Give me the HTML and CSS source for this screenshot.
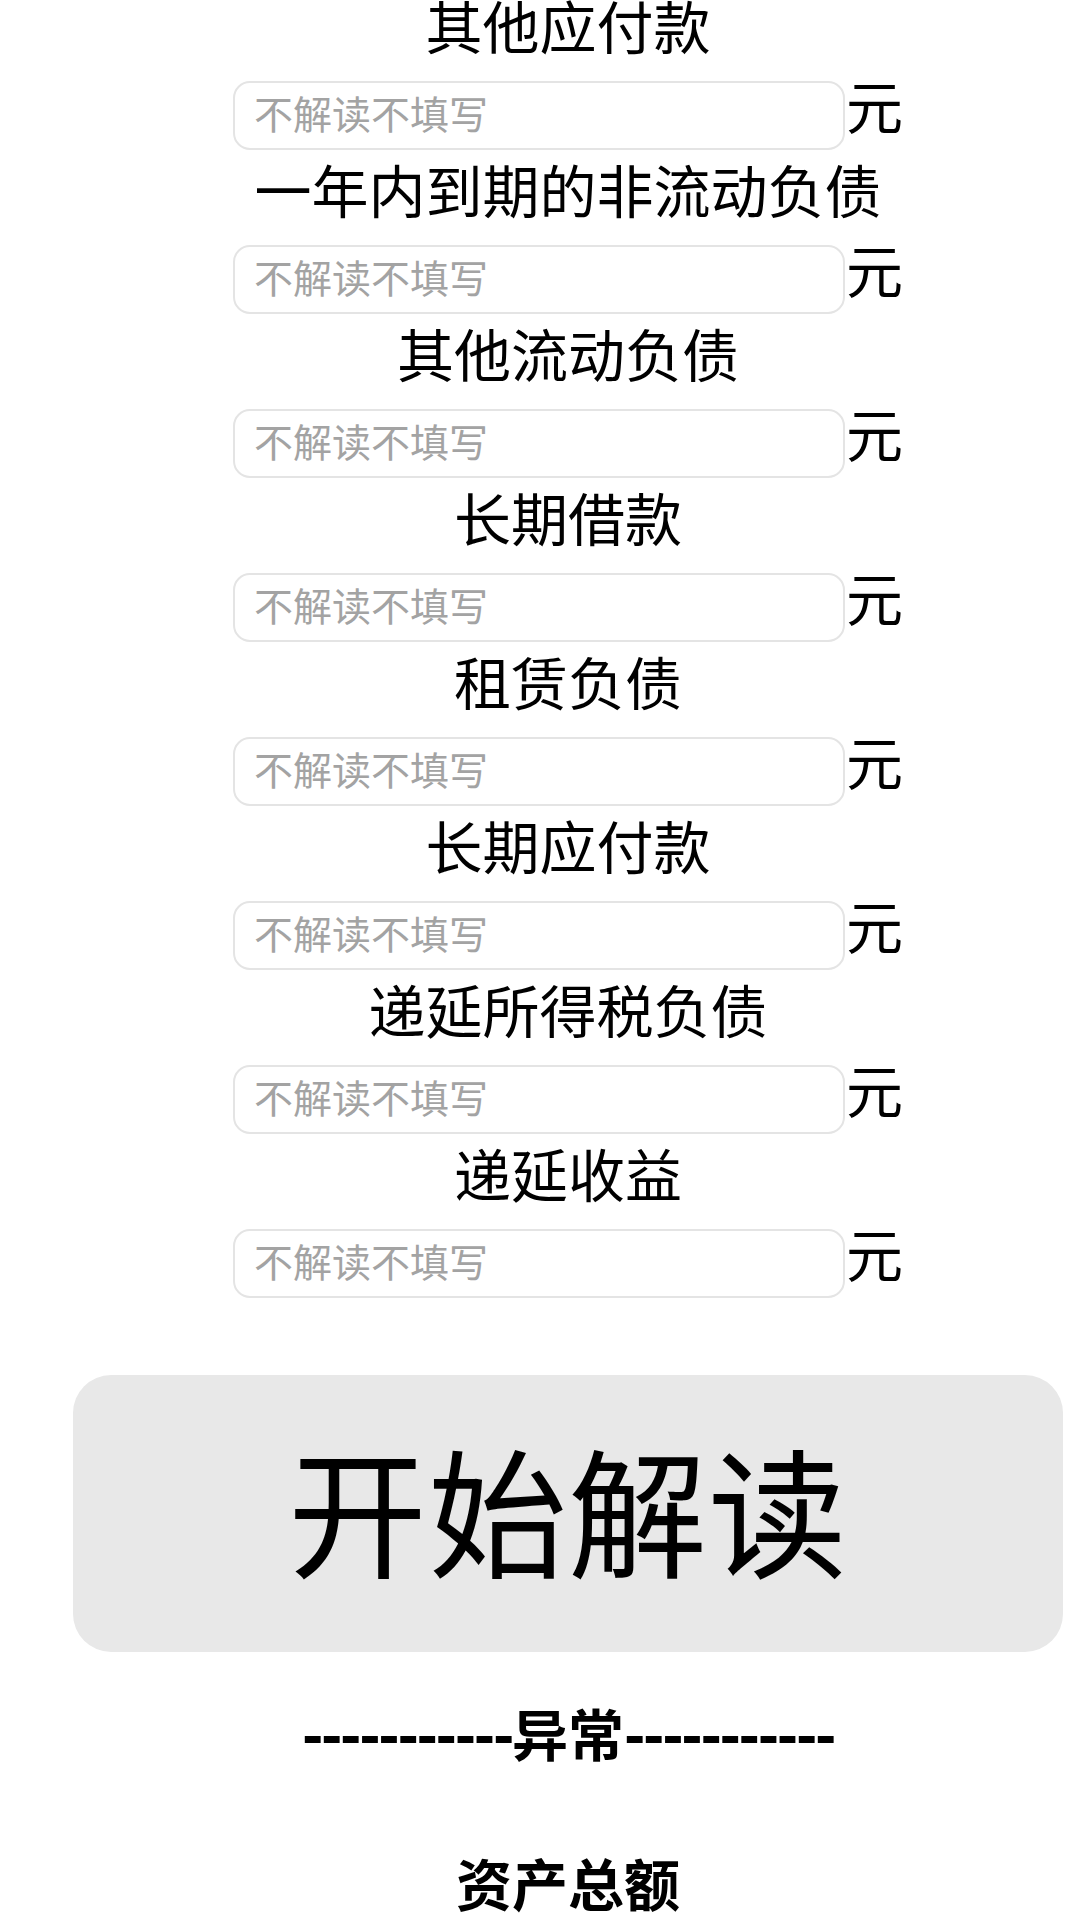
FILE: index.html
```html
<!DOCTYPE html>
<html lang="zh-CN">
<head>
<meta charset="utf-8">
<title>解读</title>
<link rel="stylesheet" href="styles.css">
</head>
<body>
<div class="viewport">
<div class="page">
  <div class="field">
    <div class="label">其他应付款</div>
    <div class="row"><div class="input">不解读不填写</div><span class="unit">元</span></div>
  </div>
  <div class="field">
    <div class="label">一年内到期的非流动负债</div>
    <div class="row"><div class="input">不解读不填写</div><span class="unit">元</span></div>
  </div>
  <div class="field">
    <div class="label">其他流动负债</div>
    <div class="row"><div class="input">不解读不填写</div><span class="unit">元</span></div>
  </div>
  <div class="field">
    <div class="label">长期借款</div>
    <div class="row"><div class="input">不解读不填写</div><span class="unit">元</span></div>
  </div>
  <div class="field">
    <div class="label">租赁负债</div>
    <div class="row"><div class="input">不解读不填写</div><span class="unit">元</span></div>
  </div>
  <div class="field">
    <div class="label">长期应付款</div>
    <div class="row"><div class="input">不解读不填写</div><span class="unit">元</span></div>
  </div>
  <div class="field">
    <div class="label">递延所得税负债</div>
    <div class="row"><div class="input">不解读不填写</div><span class="unit">元</span></div>
  </div>
  <div class="field">
    <div class="label">递延收益</div>
    <div class="row"><div class="input">不解读不填写</div><span class="unit">元</span></div>
  </div>

  <div class="start-btn">开始解读</div>

  <div class="divider"><span class="dashes">-----------</span>异常<span class="dashes">-----------</span></div>

  <div class="total">资产总额</div>
</div>
</div>
</body>
</html>
```

FILE: styles.css
```css
html, body {
  margin: 0;
  padding: 0;
  background: #ffffff;
}

body {
  font-family: "Noto Sans CJK SC", "Noto Sans", sans-serif;
  color: #000000;
}

.viewport {
  width: 1080px;
  height: 1920px;
  overflow: hidden;
}

.page {
  width: 1136px;
  margin-top: -14px;
  display: flex;
  flex-direction: column;
}

.field {
  display: flex;
  flex-direction: column;
}

.label {
  box-sizing: border-box;
  height: 94px;
  line-height: 76px;
  padding-bottom: 18px;
  font-size: 57px;
  text-align: center;
  white-space: nowrap;
}

.row {
  height: 70px;
  display: flex;
  align-items: center;
  justify-content: center;
}

.input {
  box-sizing: border-box;
  width: 612px;
  height: 69px;
  border: 2px solid #e4e4e4;
  border-radius: 17px;
  padding-left: 19px;
  padding-bottom: 7px;
  display: flex;
  align-items: center;
  font-size: 39px;
  color: #a3a3a3;
  background: #ffffff;
}

.unit {
  font-size: 57px;
  line-height: 69px;
  margin-left: 1px;
  margin-bottom: 22px;
}

.start-btn {
  box-sizing: border-box;
  margin: 77px 73px 0 73px;
  height: 277px;
  padding-bottom: 14px;
  border-radius: 38px;
  background: #e8e8e8;
  display: flex;
  align-items: center;
  justify-content: center;
  font-size: 139px;
  letter-spacing: 1px;
}

.divider {
  margin-top: 40px;
  height: 80px;
  line-height: 80px;
  font-size: 56px;
  font-weight: bold;
  text-align: center;
  white-space: nowrap;
}

.dashes {
  letter-spacing: -2.35px;
  font-weight: 900;
}

.total {
  margin-top: 70px;
  height: 80px;
  line-height: 80px;
  font-size: 56px;
  font-weight: bold;
  text-align: center;
}
```
